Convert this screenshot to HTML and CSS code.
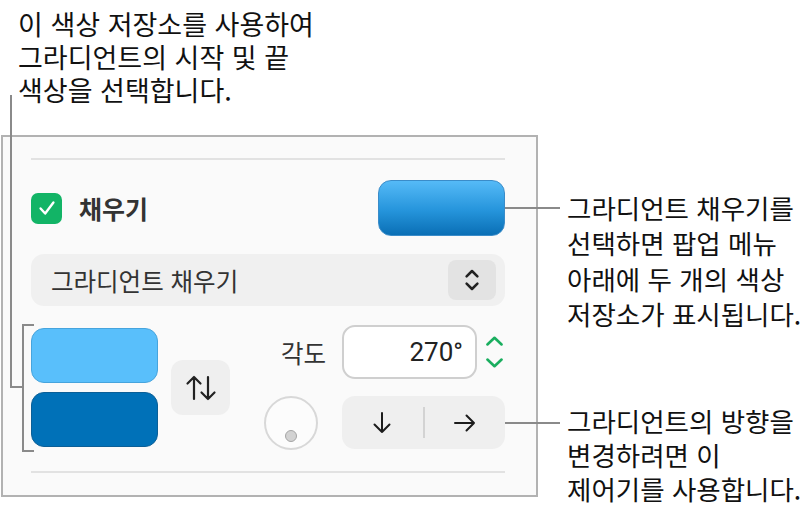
FILE: index.html
```html
<!DOCTYPE html>
<html lang="ko">
<head>
    <meta charset="UTF-8">
    <meta name="viewport" content="width=device-width, initial-scale=1.0">
    <title>그라디언트 채우기</title>
    <link rel="stylesheet" href="styles.css">
</head>
<body>
<div class="page">
    <p class="note note-top">이 색상 저장소를 사용하여<br>그라디언트의 시작 및 끝<br>색상을 선택합니다.</p>

    <section class="panel">
        <div class="sep"></div>

        <div class="fill-row">
            <label class="fill-check">
                <span class="checkbox">
                    <svg viewBox="0 0 24 24" width="22" height="22"><path d="M5 12.5 L10 18 L19 6" fill="none" stroke="#fff" stroke-width="2.6" stroke-linecap="round" stroke-linejoin="round"/></svg>
                </span>
                <span class="fill-label">채우기</span>
            </label>
            <div class="fill-swatch"></div>
        </div>

        <div class="popup">
            <span class="popup-text">그라디언트 채우기</span>
            <span class="popup-stepper">
                <svg viewBox="0 0 20 28" width="18" height="26"><path d="M4 10 L10 4 L16 10 M4 18 L10 24 L16 18" fill="none" stroke="#222" stroke-width="2.8" stroke-linecap="round" stroke-linejoin="round"/></svg>
            </span>
        </div>

        <div class="controls">
            <div class="wells">
                <div class="well well-start"></div>
                <div class="well well-end"></div>
            </div>
            <div class="swap">
                <svg viewBox="0 0 32 28" width="32" height="28"><path d="M9 25 V3 M2.5 9.5 L9 3 L15.5 9.5 M23 3 V25 M16.5 18.5 L23 25 L29.5 18.5" fill="none" stroke="#222" stroke-width="2.2" stroke-linecap="round" stroke-linejoin="round"/></svg>
            </div>
            <div class="angle-grid">
                <span class="angle-label">각도</span>
                <div class="angle-field">270°</div>
                <div class="angle-stepper">
                    <svg viewBox="0 0 20 36" width="19" height="34"><path d="M2.5 10 L10 3 L17.5 10 M2.5 26 L10 33 L17.5 26" fill="none" stroke="#1aae5f" stroke-width="2.8" stroke-linecap="round" stroke-linejoin="round"/></svg>
                </div>
                <div class="knob"><span class="knob-dot"></span></div>
                <div class="direction">
                    <span class="dir-btn">
                        <svg viewBox="0 0 24 24" width="24" height="24"><path d="M12 2 V21 M4.5 13.5 L12 21 L19.5 13.5" fill="none" stroke="#1c1c1c" stroke-width="2" stroke-linecap="round" stroke-linejoin="round"/></svg>
                    </span>
                    <span class="dir-divider"></span>
                    <span class="dir-btn">
                        <svg viewBox="0 0 24 24" width="24" height="24"><path d="M2 12 H21 M13.5 4.5 L21 12 L13.5 19.5" fill="none" stroke="#1c1c1c" stroke-width="2" stroke-linecap="round" stroke-linejoin="round"/></svg>
                    </span>
                </div>
            </div>
        </div>

        <div class="sep sep-bottom"></div>
    </section>

    <p class="note note-fill">그라디언트 채우기를<br>선택하면 팝업 메뉴<br>아래에 두 개의 색상<br>저장소가 표시됩니다.</p>
    <p class="note note-dir">그라디언트의 방향을<br>변경하려면 이<br>제어기를 사용합니다.</p>

    <!-- leader lines -->
    <div class="leader leader-top"></div>
    <div class="leader leader-top-foot"></div>
    <div class="bracket"></div>
    <div class="leader leader-fill"></div>
    <div class="leader leader-dir"></div>
</div>
</body>
</html>
```

FILE: styles.css
```css
body {
    margin: 0;
    background: #fff;
    font-family: "Noto Sans CJK KR", "Noto Sans", sans-serif;
    color: #111;
}
.page {
    position: relative;
    width: 811px;
    height: 508px;
    overflow: hidden;
}
.note {
    margin: 0;
    font-size: 26.5px;
    line-height: 33px;
    color: #111;
}
.note-top {
    padding: 7px 0 0 18px;
    height: 99px;
    font-size: 27px;
}
.note-fill {
    position: absolute;
    left: 567px;
    top: 190px;
    line-height: 35.3px;
}
.note-dir {
    position: absolute;
    left: 567px;
    top: 404px;
    line-height: 34px;
}

/* inspector panel */
.panel {
    box-sizing: border-box;
    width: 537px;
    height: 362px;
    margin: 29px 0 0 1px;
    padding: 0 31px 0 28px;
    border: 2px solid #b2b2b2;
    background: #fafafa;
    display: flex;
    flex-direction: column;
}
.sep {
    height: 2px;
    background: #e2e2e2;
    margin-top: 21px;
}
.sep-bottom {
    margin-top: 21px;
}
.fill-row {
    margin-top: 20px;
    height: 56px;
    display: flex;
    align-items: center;
    justify-content: space-between;
}
.fill-check {
    display: flex;
    align-items: center;
    gap: 17px;
}
.checkbox {
    width: 31px;
    height: 31px;
    border-radius: 7px;
    background: #12b466;
    display: flex;
    align-items: center;
    justify-content: center;
}
.fill-label {
    font-size: 25px;
    font-weight: 700;
    color: #333;
}
.fill-swatch {
    box-sizing: border-box;
    width: 127px;
    height: 56px;
    border-radius: 13px;
    border: 1px solid #3a8cc9;
    background: linear-gradient(to bottom, #55baf7, #2594db 55%, #0a6fb5);
}
.popup {
    margin-top: 18px;
    height: 52px;
    border-radius: 13px;
    background: #f0f0f0;
    display: flex;
    align-items: center;
    justify-content: space-between;
    padding: 0 9px 0 20px;
}
.popup-text {
    font-size: 24.5px;
    color: #333;
}
.popup-stepper {
    width: 48px;
    height: 40px;
    border-radius: 8px;
    background: #e3e3e3;
    display: flex;
    align-items: center;
    justify-content: center;
}

/* gradient controls */
.controls {
    margin-top: 19px;
    height: 125px;
    display: flex;
    align-items: center;
}
.wells {
    display: flex;
    flex-direction: column;
    gap: 9px;
    width: 127px;
}
.well {
    box-sizing: border-box;
    height: 55px;
    border-radius: 13px;
}
.well-start {
    background: #59bffb;
    border: 1px solid #46a4dd;
}
.well-end {
    background: #0071b8;
    border: 1px solid #0b5f97;
}
.swap {
    margin-left: 13px;
    width: 59px;
    height: 55px;
    border-radius: 12px;
    background: #efefef;
    display: flex;
    align-items: center;
    justify-content: center;
}
.angle-grid {
    display: grid;
    grid-template-columns: 112px 135px 28px;
    grid-template-rows: 54px 53px;
    row-gap: 17px;
    height: 125px;
}
.angle-label {
    font-size: 24.5px;
    color: #333;
    align-self: center;
    justify-self: end;
    margin-right: 16px;
}
.angle-field {
    box-sizing: border-box;
    border: 2px solid #cfcfcf;
    border-radius: 13px;
    background: #fff;
    font-family: Roboto, "Noto Sans", sans-serif;
    font-size: 26px;
    color: #222;
    display: flex;
    align-items: center;
    justify-content: flex-end;
    padding-right: 12px;
}
.angle-stepper {
    display: flex;
    align-items: center;
    justify-content: flex-end;
    padding-right: 1px;
}
.knob {
    box-sizing: border-box;
    width: 54px;
    height: 54px;
    border-radius: 50%;
    border: 2px solid #d8d8d8;
    background: #fcfcfc;
    justify-self: end;
    align-self: center;
    margin-right: 24px;
    display: flex;
    justify-content: center;
    align-items: flex-end;
    padding-bottom: 6px;
}
.knob-dot {
    box-sizing: border-box;
    width: 12px;
    height: 12px;
    border-radius: 50%;
    background: #d2d2d2;
    border: 1.5px solid #a5a5a5;
}
.direction {
    grid-column: 2 / 4;
    border-radius: 13px;
    background: #efefef;
    display: flex;
    align-items: center;
}
.dir-btn {
    flex: 1;
    display: flex;
    justify-content: center;
}
.dir-divider {
    width: 2px;
    height: 31px;
    background: #d3d3d3;
}

/* annotation lines */
.leader,
.bracket {
    position: absolute;
    border-color: #8a8a8a;
}
.leader-top {
    left: 10px;
    top: 95px;
    height: 293px;
    border-left: 2px solid #8a8a8a;
}
.leader-top-foot {
    left: 10px;
    top: 386px;
    width: 13px;
    border-top: 2px solid #8a8a8a;
}
.bracket {
    left: 22px;
    top: 324px;
    width: 10px;
    height: 124px;
    border: 2px solid #8a8a8a;
    border-right: none;
}
.leader-fill {
    left: 505px;
    top: 207px;
    width: 55px;
    border-top: 2px solid #8a8a8a;
}
.leader-dir {
    left: 505px;
    top: 422px;
    width: 55px;
    border-top: 2px solid #8a8a8a;
}
```
